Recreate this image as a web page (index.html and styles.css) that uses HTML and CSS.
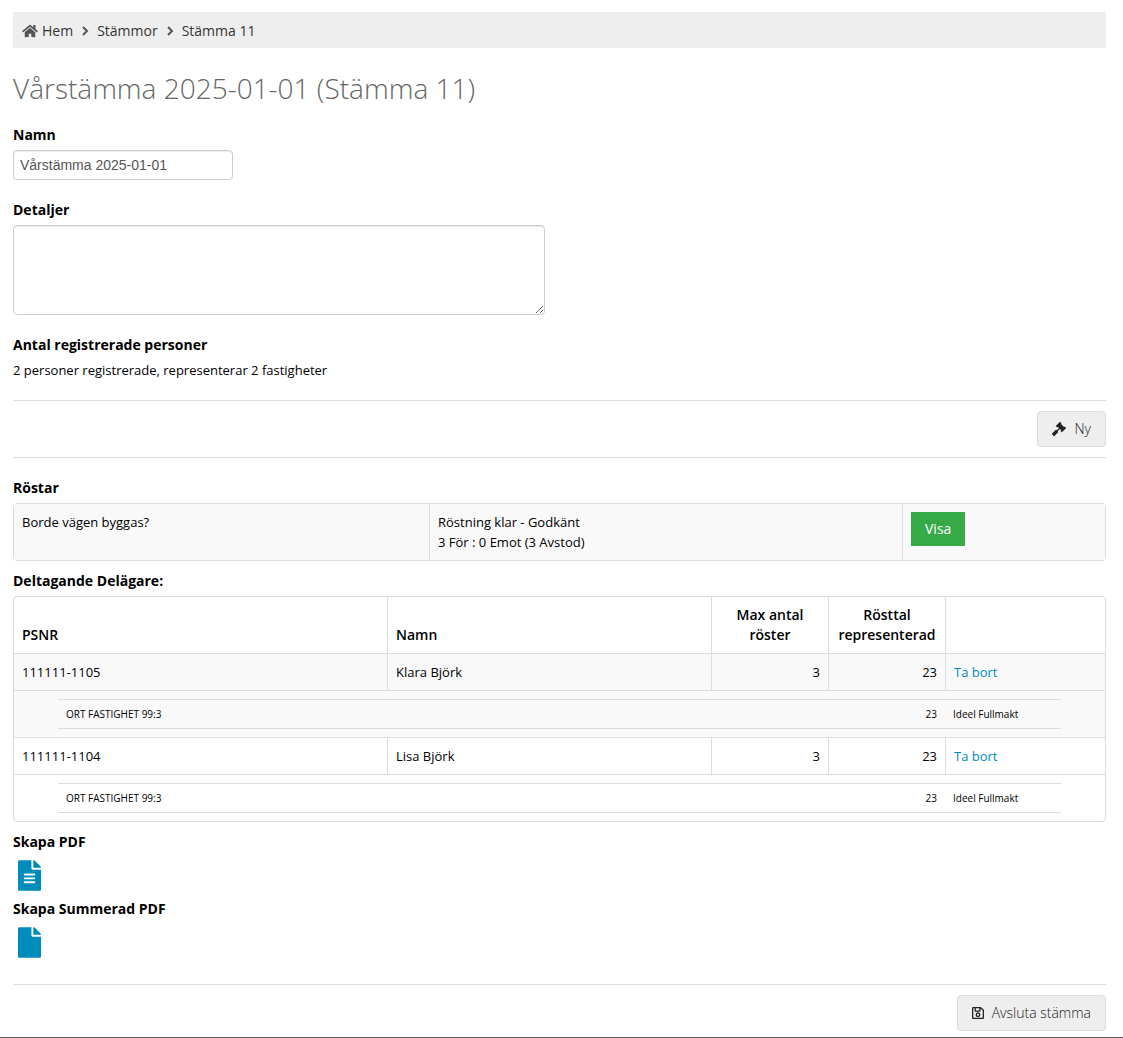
FILE: index.html
```html
<!DOCTYPE html>
<html lang="sv">
<head>
<meta charset="utf-8">
<title>Stämma 11</title>
<link rel="stylesheet" href="styles.css">
</head>
<body>
<main class="page">
  <nav class="breadcrumb" aria-label="Sökväg">
    <svg class="icon-home" viewBox="0 0 576 512" aria-hidden="true"><path d="M280.37 148.26L96 300.11V464a16 16 0 0 0 16 16l112.06-.29a16 16 0 0 0 15.92-16V368a16 16 0 0 1 16-16h64a16 16 0 0 1 16 16v95.64a16 16 0 0 0 16 16.05L464 480a16 16 0 0 0 16-16V300L295.67 148.26a12.19 12.19 0 0 0-15.3 0zM571.6 251.47L488 182.56V44.05a12 12 0 0 0-12-12h-56a12 12 0 0 0-12 12v72.61L318.47 43a48 48 0 0 0-61 0L4.34 251.47a12 12 0 0 0-1.6 16.9l25.5 31A12 12 0 0 0 45.15 301l235.22-193.74a12.19 12.19 0 0 1 15.3 0L530.9 301a12 12 0 0 0 16.9-1.6l25.5-31a12 12 0 0 0-1.7-16.93z"/></svg>
    <a href="#hem">Hem</a>
    <svg class="chevron" viewBox="0 0 8 10" aria-hidden="true"><path d="M2 1l4 4-4 4"/></svg>
    <a href="#stammor">Stämmor</a>
    <svg class="chevron" viewBox="0 0 8 10" aria-hidden="true"><path d="M2 1l4 4-4 4"/></svg>
    <a href="#stamma-11">Stämma 11</a>
  </nav>

  <h1>Vårstämma 2025-01-01 (Stämma 11)</h1>

  <form class="details">
    <div class="field">
      <label class="title" for="namn">Namn</label>
      <input class="name" id="namn" type="text" value="Vårstämma 2025-01-01">
    </div>
    <div class="field">
      <label class="title" for="detaljer">Detaljer</label>
      <textarea id="detaljer"></textarea>
    </div>
    <div class="field">
      <h2 class="title">Antal registrerade personer</h2>
      <p>2 personer registrerade, representerar 2 fastigheter</p>
    </div>
  </form>

  <div class="actions new-vote">
    <button class="button" type="button">
      <svg class="icon-gavel" viewBox="0 0 512 512" aria-hidden="true"><path d="M504.971 199.362l-22.627-22.627c-9.373-9.373-24.569-9.373-33.941 0l-5.657 5.657L329.608 69.255l5.657-5.657c9.373-9.373 9.373-24.569 0-33.941L312.638 7.029c-9.373-9.373-24.569-9.373-33.941 0L154.246 131.48c-9.373 9.373-9.373 24.569 0 33.941l22.627 22.627c9.373 9.373 24.569 9.373 33.941 0l5.657-5.657 39.598 39.598-81.04 81.04-5.657-5.657c-12.497-12.497-32.758-12.497-45.255 0L9.373 412.118c-12.497 12.497-12.497 32.758 0 45.255l45.255 45.255c12.497 12.497 32.758 12.497 45.255 0l114.745-114.745c12.497-12.497 12.497-32.758 0-45.255l-5.657-5.657 81.04-81.04 39.598 39.598-5.657 5.657c-9.373 9.373-9.373 24.569 0 33.941l22.627 22.627c9.373 9.373 24.569 9.373 33.941 0l124.451-124.451c9.372-9.372 9.372-24.568 0-33.941z"/></svg>
      Ny
    </button>
  </div>

  <section class="block">
    <h2 class="title">Röstar</h2>
    <table class="grid-table votes">
      <colgroup><col class="col-question"><col><col class="col-show"></colgroup>
      <tbody>
        <tr class="shaded">
          <td>Borde vägen byggas?</td>
          <td>Röstning klar - Godkänt<br>3 För : 0 Emot (3 Avstod)</td>
          <td><button class="show" type="button">Visa</button></td>
        </tr>
      </tbody>
    </table>
  </section>

  <section class="block">
    <h2 class="title">Deltagande Delägare:</h2>
    <table class="grid-table owners">
      <colgroup><col><col class="col-name"><col class="col-number"><col class="col-number"><col class="col-remove"></colgroup>
      <thead>
        <tr>
          <th scope="col">PSNR</th>
          <th scope="col">Namn</th>
          <th class="center" scope="col">Max antal röster</th>
          <th class="center" scope="col">Rösttal representerad</th>
          <td></td>
        </tr>
      </thead>
      <tbody>
        <tr class="shaded">
          <td>111111-1105</td>
          <td>Klara Björk</td>
          <td class="number">3</td>
          <td class="number">23</td>
          <td><a href="#ta-bort-1105">Ta bort</a></td>
        </tr>
        <tr class="shaded">
          <td class="cell-nested" colspan="5">
            <table class="properties">
              <tbody><tr><td>ORT FASTIGHET 99:3</td><td class="number">23</td><td class="proxy">Ideel Fullmakt</td></tr></tbody>
            </table>
          </td>
        </tr>
        <tr>
          <td>111111-1104</td>
          <td>Lisa Björk</td>
          <td class="number">3</td>
          <td class="number">23</td>
          <td><a href="#ta-bort-1104">Ta bort</a></td>
        </tr>
        <tr>
          <td class="cell-nested" colspan="5">
            <table class="properties">
              <tbody><tr><td>ORT FASTIGHET 99:3</td><td class="number">23</td><td class="proxy">Ideel Fullmakt</td></tr></tbody>
            </table>
          </td>
        </tr>
      </tbody>
    </table>
  </section>

  <section class="block document">
    <h2 class="title">Skapa PDF</h2>
    <a class="file" href="#pdf" aria-label="Skapa PDF"><svg viewBox="0 0 384 512" aria-hidden="true"><path d="M224 136V0H24C10.7 0 0 10.7 0 24v464c0 13.3 10.7 24 24 24h336c13.3 0 24-10.7 24-24V160H248c-13.2 0-24-10.8-24-24zm64 236c0 6.600-5.400 12-12 12H108c-6.600 0-12-5.400-12-12v-8c0-6.600 5.400-12 12-12h168c6.600 0 12 5.400 12 12v8zm0-64c0 6.600-5.400 12-12 12H108c-6.600 0-12-5.400-12-12v-8c0-6.600 5.400-12 12-12h168c6.600 0 12 5.400 12 12v8zm0-72v8c0 6.600-5.400 12-12 12H108c-6.600 0-12-5.400-12-12v-8c0-6.600 5.400-12 12-12h168c6.600 0 12 5.400 12 12zm96-114.100v6.100H256V0h6.100c6.400 0 12.500 2.500 17 7l97.900 98c4.500 4.500 7 10.600 7 16.900z"/></svg></a>
  </section>
  <section class="block document">
    <h2 class="title">Skapa Summerad PDF</h2>
    <a class="file" href="#summerad-pdf" aria-label="Skapa summerad PDF"><svg viewBox="0 0 384 512" aria-hidden="true"><path d="M224 136V0H24C10.700 0 0 10.700 0 24v464c0 13.300 10.700 24 24 24h336c13.300 0 24-10.700 24-24V160H248c-13.200 0-24-10.800-24-24zm160-14.100v6.100H256V0h6.100c6.400 0 12.500 2.500 17 7l97.900 98c4.500 4.500 7 10.600 7 16.900z"/></svg></a>
  </section>

  <div class="actions finish">
    <button class="button" type="button">
      <svg class="icon-save" viewBox="0 0 448 512" aria-hidden="true"><path d="M433.941 129.941l-83.882-83.882A48 48 0 0 0 316.118 32H48C21.490 32 0 53.490 0 80v352c0 26.510 21.490 48 48 48h352c26.510 0 48-21.490 48-48V163.882a48 48 0 0 0-14.059-33.941zM272 80v80H144V80h128zm122 352H54a6 6 0 0 1-6-6V86a6 6 0 0 1 6-6h42v104c0 13.255 10.745 24 24 24h176c13.255 0 24-10.745 24-24V83.882l78.243 78.243a6 6 0 0 1 1.757 4.243V426a6 6 0 0 1-6 6zM224 232c-48.523 0-88 39.477-88 88s39.477 88 88 88 88-39.477 88-88-39.477-88-88-88zm0 128c-22.056 0-40-17.944-40-40s17.944-40 40-40 40 17.944 40 40-17.944 40-40 40z"/></svg>
      Avsluta stämma
    </button>
  </div>
</main>
</body>
</html>
```
FILE: styles.css
```css
* {
  box-sizing: border-box;
}

body {
  margin: 0;
  background: #fff;
  color: #000;
  font-family: "Open Sans", sans-serif;
  font-size: 13px;
  line-height: 20px;
}

h1,
h2,
p {
  margin: 0;
}

a {
  color: #008cba;
  text-decoration: none;
}

svg {
  display: block;
  fill: currentColor;
}

.page {
  padding: 12px 17px 6px 13px;
  border-bottom: 1px solid #666;
}

/* Breadcrumb */
.breadcrumb {
  display: flex;
  align-items: center;
  padding: 9px 9px 7px;
  background: #eee;
  color: #555;
  font-size: 14px;
}

.breadcrumb a {
  color: #333;
}

.icon-home {
  width: 16px;
  height: 14px;
  margin-right: 4px;
}

.chevron {
  width: 8px;
  height: 10px;
  margin: 0 8px;
  fill: none;
  stroke: currentColor;
  stroke-width: 2;
}

h1 {
  margin: 20px 0 17px;
  color: #666;
  font-size: 28px;
  font-weight: 300;
  line-height: 40px;
}

/* Meeting details */
.title {
  display: block;
  font-size: 14px;
  font-weight: 700;
  line-height: 20px;
}

.details {
  display: flex;
  flex-direction: column;
  gap: 20px;
}

.field {
  display: flex;
  flex-direction: column;
  align-items: flex-start;
  gap: 5px;
}

.field input,
.field textarea {
  max-width: 100%;
  padding: 4px 6px;
  border: 1px solid #ccc;
  border-radius: 4px;
  background: #fff;
  box-shadow: inset 0 1px 1px rgba(0, 0, 0, 0.08);
  color: #555;
  font: 14px/20px "Liberation Sans", sans-serif;
}

.field .name {
  width: 220px;
  height: 30px;
}

.field textarea {
  width: 532px;
  height: 90px;
}

/* Button rows */
.actions {
  display: flex;
  justify-content: flex-end;
  border-top: 1px solid #ddd;
  padding-top: 10px;
}

.new-vote {
  margin-top: 20px;
  padding-bottom: 10px;
  border-bottom: 1px solid #ddd;
}

.finish {
  margin-top: 26px;
}

.button {
  display: flex;
  align-items: center;
  gap: 8px;
  height: 36px;
  padding: 0 14px;
  border: 1px solid #ddd;
  border-radius: 4px;
  background: #eee;
  color: #222;
  font: 300 14px/20px "Open Sans", sans-serif;
}

.icon-gavel {
  width: 14px;
  height: 14px;
}

.icon-save {
  width: 12px;
  height: 14px;
}

/* Tables */
.block {
  display: flex;
  flex-direction: column;
  gap: 5px;
  margin-top: 10px;
}

.new-vote + .block {
  margin-top: 20px;
}

.grid-table {
  width: 100%;
  table-layout: fixed;
  border: 1px solid #ddd;
  border-radius: 4px;
  border-spacing: 0;
}

.grid-table td,
.grid-table th {
  padding: 8px;
  text-align: left;
  vertical-align: top;
}

.grid-table th {
  font-size: 14px;
  font-weight: 600;
  vertical-align: bottom;
}

.grid-table tr > * + * {
  border-left: 1px solid #ddd;
}

.owners > tbody > tr > td {
  border-top: 1px solid #ddd;
}

.shaded {
  background: #f9f9f9;
}

.col-question {
  width: 415px;
}

.col-show {
  width: 203px;
}

.col-name {
  width: 324px;
}

.col-number {
  width: 117px;
}

.col-remove {
  width: 160px;
}

.grid-table .center {
  text-align: center;
}

.grid-table .number {
  text-align: right;
}

.show {
  display: block;
  height: 34px;
  padding: 0 14px;
  border: 0;
  background: #35aa47;
  color: #fff;
  font: 14px/20px "Open Sans", sans-serif;
}

.properties {
  width: 100%;
  table-layout: fixed;
  border-top: 1px solid #ddd;
  border-bottom: 1px solid #ddd;
  border-spacing: 0;
  font-size: 10px;
}

.owners .cell-nested {
  padding: 8px 44px;
}

.grid-table .properties td {
  padding: 4px 8px;
  border: 0;
}

.properties .proxy {
  width: 116px;
}

/* Document links */
.document {
  gap: 8px;
}

.document + .document {
  margin-top: 8px;
}

.file {
  align-self: flex-start;
  margin-left: 5px;
}

.file svg {
  width: 23px;
  height: 31px;
}
```
